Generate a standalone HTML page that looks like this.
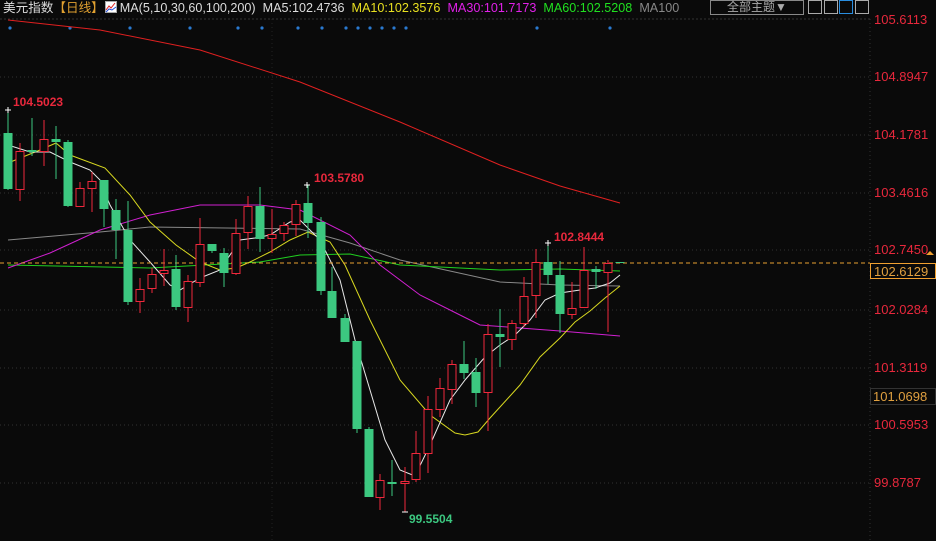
<!DOCTYPE html>
<html><head><meta charset="utf-8"><style>
html,body{margin:0;padding:0;background:#0a0a0a;width:936px;height:541px;overflow:hidden;font-family:"Liberation Sans","Noto Sans CJK SC",sans-serif}
.hdr{position:absolute;top:0;left:3px;font-size:12.6px;white-space:nowrap;line-height:16px}
.ax{position:absolute;left:874px;font-size:13px;color:#e8283c}
</style></head><body>
<div class="hdr"><span style="color:#ddd">美元指数</span><span style="color:#e0a030">【日线】</span><svg width="12" height="12" style="vertical-align:-1px;margin:0 3px 0 1px"><rect x="0.5" y="0.5" width="11" height="11" fill="#fff" stroke="#aaa"/><path d="M1,9L4,5L6,7L10,2" stroke="#e02020" fill="none"/><path d="M1,11L4,8L7,9L11,6" stroke="#2050e0" fill="none"/></svg><span style="color:#ddd">MA(5,10,30,60,100,200)&nbsp; MA5:102.4736&nbsp; </span><span style="color:#e8e020">MA10:102.3576&nbsp; </span><span style="color:#e020e8">MA30:101.7173&nbsp; </span><span style="color:#20e020">MA60:102.5208&nbsp; </span><span style="color:#888">MA100</span></div>
<div style="position:absolute;left:710px;top:0;width:92px;height:13px;border:1px solid #888;color:#aaa;font-size:12px;line-height:13px;text-align:center">全部主题▼</div>
<div style="position:absolute;left:808px;top:0;width:12px;height:12px;border:1px solid #aaa"></div>
<div style="position:absolute;left:824px;top:0;width:12px;height:12px;border:1px solid #aaa"></div>
<div style="position:absolute;left:839px;top:0;width:12px;height:12px;border:1px solid #2a8ee0"></div>
<div style="position:absolute;left:855px;top:0;width:12px;height:12px;border:1px solid #aaa"></div>
<svg id="s" width="936" height="541" style="position:absolute;left:0;top:0"></svg>
<div class="ax" style="top:12px">105.6113</div>
<div class="ax" style="top:69px">104.8947</div>
<div class="ax" style="top:127px">104.1781</div>
<div class="ax" style="top:185px">103.4616</div>
<div class="ax" style="top:242px">102.7450</div>
<div class="ax" style="top:302px">102.0284</div>
<div class="ax" style="top:360px">101.3119</div>
<div class="ax" style="top:417px">100.5953</div>
<div class="ax" style="top:475px">99.8787</div>
<div style="position:absolute;left:870px;top:263px;height:16px;border:1px solid #f0a030;color:#e0a040;font-size:13px;line-height:16px;padding-left:3px;box-sizing:border-box;width:66px;background:#0a0a0a">102.6129</div>
<div style="position:absolute;left:870px;top:388px;width:66px;height:17px;border:1px solid #333;color:#e0a040;font-size:13px;line-height:16px;padding-left:2px;box-sizing:border-box">101.0698</div>
<div style="position:absolute;left:13px;top:95px;color:#e8283c;font-size:12px;font-weight:bold">104.5023</div>
<div style="position:absolute;left:314px;top:171px;color:#e8283c;font-size:12px;font-weight:bold">103.5780</div>
<div style="position:absolute;left:554px;top:230px;color:#e8283c;font-size:12px;font-weight:bold">102.8444</div>
<div style="position:absolute;left:409px;top:512px;color:#3cc880;font-size:12px;font-weight:bold">99.5504</div>
<script>
var s=document.getElementById('s'),h='';
h+='<line x1="0" y1="19" x2="870" y2="19" stroke="#333" stroke-dasharray="2,2"/>';
h+='<line x1="870" y1="19" x2="870" y2="541" stroke="#333" stroke-dasharray="1,3"/>';
h+='<line x1="272" y1="19" x2="272" y2="541" stroke="#222" stroke-dasharray="1,3"/>';
[77,135,193,250,310,368,425,483].forEach(function(y){h+='<line x1="0" y1="'+y+'" x2="870" y2="'+y+'" stroke="#333" stroke-dasharray="1,3"/>';});
[10,70,130,190,238,262,298,322,346,358,370,382,394,406,537,610].forEach(function(x){h+='<circle cx="'+x+'" cy="28" r="1.6" fill="#2a7ad0"/>';});
function pl(p,c){h+='<polyline fill="none" stroke="'+c+'" stroke-width="1" points="'+p+'"/>';}
pl("8,20 100,30 200,50 300,82 400,122 500,165 560,186 620,203","#e02020");
pl("8,240 100,232 150,227 300,229 350,243 400,260 500,282 560,285 620,286","#888");
pl("8,265 150,268 260,262 300,255 350,254 400,265 500,270 560,269 620,271","#20d020");
pl("8,268 50,253 100,230 150,215 200,205 260,205 300,210 350,235 380,265 420,295 460,315 480,325 520,328 560,331 620,336","#d020d0");
pl("8,163 40,150 56,143 70,155 105,168 130,195 150,222 176,245 200,262 220,270 236,268 250,262 270,252 290,240 308,232 330,242 345,265 370,320 400,380 430,415 455,433 465,435 478,432 490,418 520,385 540,357 560,338 575,322 590,311 605,298 620,286","#d8d820");
pl("8,145 30,152 50,152 70,162 90,170 100,180 110,205 130,240 150,262 170,285 180,290 200,278 220,270 240,240 255,238 270,235 290,222 300,220 320,240 340,280 355,340 370,390 385,440 400,470 415,476 430,445 450,400 465,380 485,357 500,345 515,335 530,320 545,300 560,293 580,290 595,288 610,283 620,275","#e8e8e8");
h+='<line x1="0" y1="263" x2="870" y2="263" stroke="#e8a030" stroke-dasharray="4,3"/>';
var c=[[8,133,189,110,190,'g'],[20,151,189,143,201,'r'],[32,150,152,118,156,'g'],[44,139,151,120,166,'r'],[56,139,142,126,179,'g'],[68,142,206,140,207,'g'],[80,188,206,182,207,'r'],[92,181,188,172,212,'r'],[104,180,209,180,227,'g'],[116,210,230,199,259,'g'],[128,230,302,201,305,'g'],[140,289,301,278,313,'r'],[152,274,288,268,293,'r'],[164,270,273,249,286,'r'],[176,269,307,255,310,'g'],[188,281,307,275,322,'r'],[200,244,282,218,287,'r'],[212,244,251,244,253,'g'],[224,253,273,248,287,'g'],[236,233,273,219,275,'r'],[248,206,232,196,249,'r'],[260,206,239,187,252,'g'],[272,234,238,209,253,'r'],[284,225,233,222,241,'r'],[296,204,224,200,236,'r'],[308,203,223,185,238,'g'],[321,222,291,217,295,'g'],[332,291,318,267,318,'g'],[345,318,342,314,342,'g'],[357,341,429,341,433,'g'],[369,429,497,427,497,'g'],[380,480,497,474,510,'r'],[392,482,484,460,496,'g'],[405,481,483,467,512,'r'],[416,453,479,431,482,'r'],[428,409,453,396,473,'r'],[440,388,409,378,417,'r'],[452,364,389,360,404,'r'],[464,364,373,341,379,'g'],[476,372,393,358,407,'g'],[488,334,392,324,431,'r'],[500,334,337,309,367,'g'],[512,323,339,320,350,'r'],[524,296,323,277,327,'r'],[536,262,295,249,318,'r'],[548,262,275,243,284,'g'],[560,275,314,261,333,'g'],[572,308,314,282,319,'r'],[584,270,307,247,307,'r'],[596,269,272,266,289,'g'],[608,263,272,260,332,'r'],[620,262,263,262,263,'g']];
c.forEach(function(k){var col=k[5]=='g'?'#3cc880':'#f0283c';
h+='<line x1="'+k[0]+'" y1="'+k[3]+'" x2="'+k[0]+'" y2="'+k[4]+'" stroke="'+col+'"/>';
var hh=Math.max(1,k[2]-k[1]);
if(k[5]=='g')h+='<rect x="'+(k[0]-4.5)+'" y="'+k[1]+'" width="9" height="'+hh+'" fill="'+col+'"/>';
else h+='<rect x="'+(k[0]-4)+'" y="'+(k[1]+.5)+'" width="8" height="'+hh+'" fill="#0a0a0a" stroke="'+col+'"/>';});
h+='<path d="M5,110h6M8,107v6M304,185h6M307,182v6M545,243h6M548,240v6M402,512h6" stroke="#fff"/>';
h+='<path d="M926,255l4,-4l4,4z" fill="#f0a030"/>';
s.innerHTML=h;
</script>
</body></html>
